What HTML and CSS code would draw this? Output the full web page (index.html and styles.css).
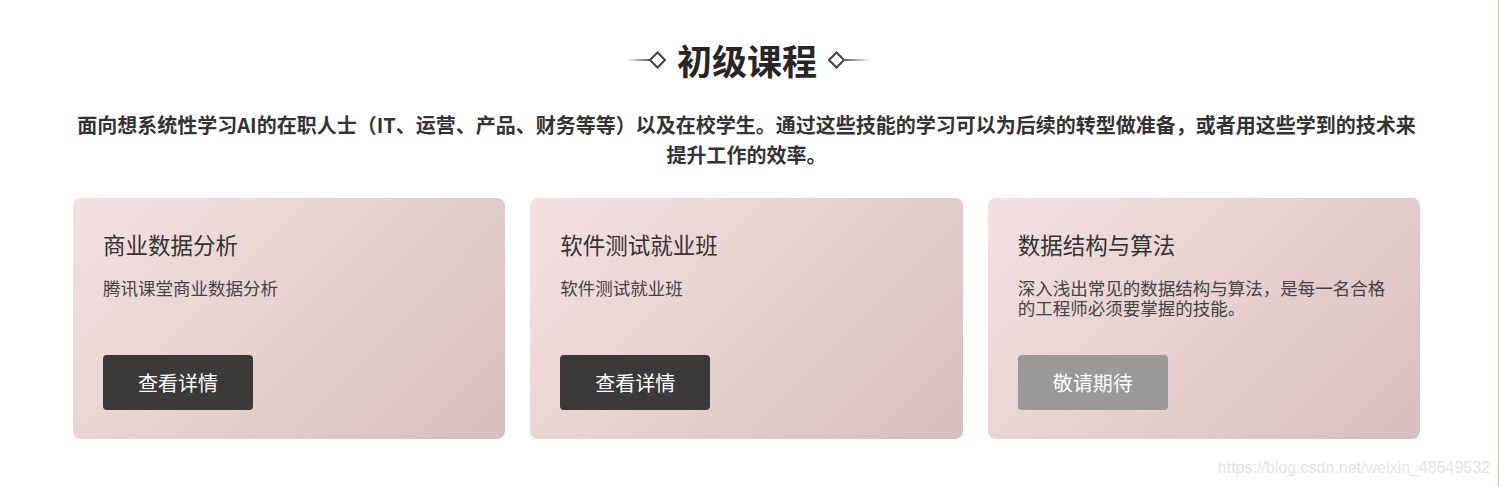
FILE: index.html
```html
<!DOCTYPE html>
<html lang="zh-CN">
<head>
<meta charset="utf-8">
<title>初级课程</title>
<link rel="stylesheet" href="styles.css">
</head>
<body>
<div class="main">
  <div class="heading">
    <svg class="deco" width="41" height="18" viewBox="0 0 41 18">
      <defs>
        <linearGradient id="gl" x1="0" x2="1" y1="0" y2="0">
          <stop offset="0" stop-color="#555" stop-opacity="0"/>
          <stop offset="1" stop-color="#555" stop-opacity="1"/>
        </linearGradient>
      </defs>
      <rect x="0" y="8" width="25" height="2" fill="url(#gl)"/>
      <polygon points="24,9 31.5,1.5 39,9 31.5,16.5" fill="none" stroke="#444" stroke-width="2"/>
    </svg>
    <h2 class="heading-text">初级课程</h2>
    <svg class="deco" width="44" height="18" viewBox="0 0 44 18">
      <defs>
        <linearGradient id="gr" x1="0" x2="1" y1="0" y2="0">
          <stop offset="0" stop-color="#555" stop-opacity="1"/>
          <stop offset="1" stop-color="#555" stop-opacity="0"/>
        </linearGradient>
      </defs>
      <polygon points="2,9 9.5,1.5 17,9 9.5,16.5" fill="none" stroke="#444" stroke-width="2"/>
      <rect x="16" y="8" width="28" height="2" fill="url(#gr)"/>
    </svg>
  </div>
  <p class="intro">面向想系统性学习AI的在职人士（IT、运营、产品、财务等等）以及在校学生。通过这些技能的学习可以为后续的转型做准备，或者用这些学到的技术来提升工作的效率。</p>
  <div class="cards">
    <div class="card">
      <h3 class="card-title">商业数据分析</h3>
      <p class="card-desc">腾讯课堂商业数据分析</p>
      <a class="btn">查看详情</a>
    </div>
    <div class="card">
      <h3 class="card-title">软件测试就业班</h3>
      <p class="card-desc">软件测试就业班</p>
      <a class="btn">查看详情</a>
    </div>
    <div class="card">
      <h3 class="card-title">数据结构与算法</h3>
      <p class="card-desc">深入浅出常见的数据结构与算法，是每一名合格的工程师必须要掌握的技能。</p>
      <a class="btn btn-disabled">敬请期待</a>
    </div>
  </div>
</div>
<div class="edge"></div>
<div class="watermark">https://blog.csdn.net/weixin_48649532</div>
</body>
</html>
```

FILE: styles.css
```css
html, body {
  margin: 0;
  padding: 0;
  background: #fff;
}
body {
  display: flex;
  min-height: 487px;
  font-family: "Noto Sans CJK SC", "Noto Sans", sans-serif;
  overflow: hidden;
}
.main {
  flex: 1;
  padding: 38px 78px 0 73px;
}
.edge {
  width: 1px;
  background: #fbc43f;
}
.heading {
  display: flex;
  justify-content: center;
  align-items: center;
  gap: 10px;
  height: 44px;
  margin-left: 4px;
}
.heading-text {
  margin: 0;
  font-size: 35px;
  line-height: 44px;
  font-weight: 700;
  color: #262626;
}
.deco {
  display: block;
}
.intro {
  margin: 28px 0 0;
  font-size: 20px;
  line-height: 30px;
  font-weight: 700;
  color: #333;
  text-align: center;
}
.cards {
  margin-top: 28px;
  display: grid;
  grid-template-columns: repeat(3, 1fr);
  gap: 25px;
}
.card {
  height: 241px;
  box-sizing: border-box;
  padding: 31px 30px 29px;
  border-radius: 8px;
  background: linear-gradient(135deg, #f4e1e1 0%, #e6d0d0 50%, #d8bfbf 100%);
  display: flex;
  flex-direction: column;
  align-items: flex-start;
}
.card-title {
  margin: 0;
  font-size: 22.5px;
  line-height: 30px;
  font-weight: 400;
  color: #333;
}
.card-desc {
  margin: 19px 0 0;
  font-size: 17.5px;
  line-height: 20px;
  color: #444;
}
.btn {
  margin-top: auto;
  width: 150px;
  height: 55px;
  border-radius: 4px;
  background: #3a3a3a;
  color: #fff;
  font-size: 20px;
  line-height: 55px;
  text-align: center;
  cursor: pointer;
}
.btn-disabled {
  background: #999;
}
.watermark {
  position: absolute;
  right: 9px;
  top: 457px;
  font-family: "Liberation Sans", Arial, sans-serif;
  font-size: 16px;
  line-height: 22px;
  color: #e3e3e3;
}
```
